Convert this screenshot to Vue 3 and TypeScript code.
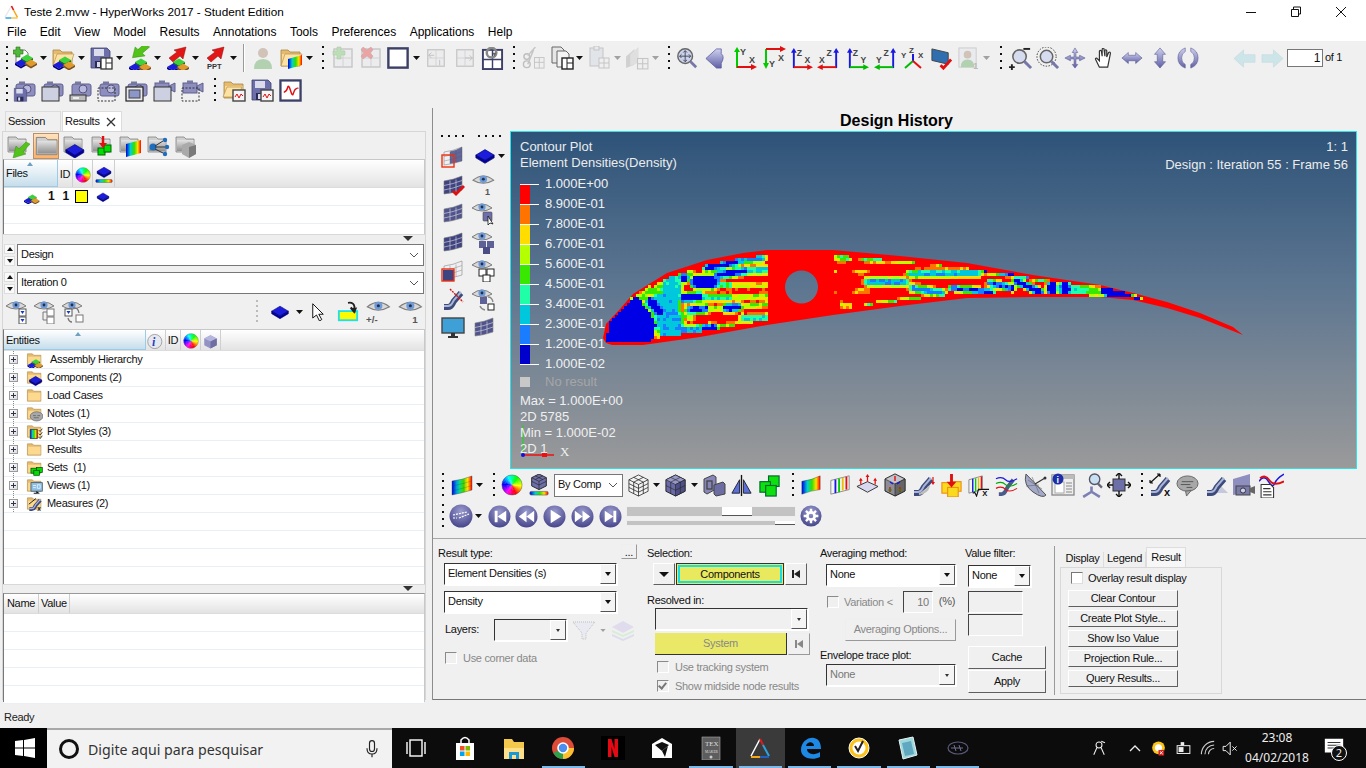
<script setup lang="ts">
type Raw = [string, number, number?, boolean?]
type Lab = [string, number, number, number, string?]
const sizes: Record<string, [number, number]> = { ar: [7, 4], grip: [2, 24], sep: [2, 28], sepd: [2, 24] }
const labels: Record<string, Lab[]> = {
  ppt: [['PPT', 4, 23, 7.5, '#333']],
  person1: [['1', 17, 23, 9, '#555']],
  axxy: [['Y', 7, 9, 9], ['X', 16, 17, 9]],
  axmxy: [['Y', 7, 21, 9], ['X', 16, 15, 9]],
  axzx: [['Z', 7, 9, 9], ['X', 15, 17, 9]],
  axxz: [['Z', 10, 9, 9], ['X', 2, 17, 9]],
  axzy: [['Z', 7, 9, 9], ['Y', 15, 17, 9]],
  axyz: [['Z', 10, 9, 9], ['Y', 2, 17, 9]],
  axiso: [['Y', 0, 12, 8], ['Z', 8, 7, 8], ['X', 17, 12, 8]],
  eyepm: [['+/-', 1, 22, 9, '#555']],
  eye1: [['1', 14, 22, 9, '#555']],
  sqrt: [['X', 16, 23, 8, '#111']],
  meas: [['x', 16, 23, 11, '#111']],
  infow: [['i', 5.5, 9.5, 9, '#fff']],
  fmeas: [['x', 16, 23, 9, '#111']],
  ttex: [['TEX', 6, 10, 7, '#ddd'], ['MAKER', 6, 17, 3.6, '#ddd']]
}
function layout(list: Raw[], start: number) {
  let end = start
  return list.map((r, i) => {
    const sp = sizes[r[0]]
    const w = r[2] ?? (sp ? sp[0] : 24)
    const h = sp ? sp[1] : w
    const s = { marginLeft: r[1] - end + 'px', width: w + 'px', height: h + 'px' }
    end = r[1] + w
    return { k: i, n: r[0], h: '#' + r[0], f: !!r[3], s, v: sp ? undefined : '0 0 24 24', t: labels[r[0]] || [] }
  })
}
const tb1 = layout([
  ['grip', 6], ['newm', 13], ['ar', 40], ['openm', 51], ['ar', 78], ['savew', 89], ['ar', 116], ['imp', 127], ['ar', 154], ['exp', 165], ['ar', 192], ['ppt', 203], ['ar', 230],
  ['sep', 243], ['person', 251, 24, true], ['fcont', 279], ['ar', 306], ['grip', 322], ['pageadd', 331, 24, true], ['pagedel', 359, 24, true], ['blank', 387, 22], ['ar', 413],
  ['pgprev', 425, 22, true], ['pgnext', 454, 22, true], ['reload', 481, 23], ['grip', 513], ['cut', 522, 23, true], ['copyw', 550, 24], ['ar', 576], ['pastew', 587, 24, true], ['ar', 614, undefined, true],
  ['overl', 625, 25, true], ['ar', 652, undefined, true], ['grip', 668], ['zfit', 676, 22], ['back', 704, 23], ['axxy', 733, 24], ['axmxy', 762, 24], ['axzx', 790, 23], ['axxz', 817, 23], ['axzy', 846, 23], ['axyz', 874, 23],
  ['axiso', 901, 24], ['scr', 930, 23], ['person1', 957, 23, true], ['ar', 983, undefined, true], ['grip', 1000], ['zarea', 1009, 23], ['zcirc', 1036, 23], ['pan', 1064, 22], ['hand', 1093, 22], ['harrow', 1121, 22], ['varrow', 1149, 22],
  ['rot', 1177, 22], ['nprev', 1233, 23, true], ['nnext', 1261, 23, true]
], 0)
const tb2 = layout([
  ['grip', 6], ['camfl', 13], ['camwin', 41], ['camstrip', 69], ['camdash', 97], ['camsel', 125], ['vidwin', 153], ['viddash', 181], ['grip', 214], ['fplot', 222], ['splot', 250], ['plot', 279, 23]
], 0)
const panelRow = layout([
  ['gfcheck', 5], ['gfplain', 33], ['gfdia', 61], ['gfset', 89], ['gfcont', 117], ['gfnet', 145], ['gfcube', 173]
], 2)
const eyeRow = layout([
  ['eyet1', 4, 24], ['eyet2', 32, 24], ['eyet3', 60, 24], ['sepd', 255], ['slab', 269, 20], ['ar', 295], ['cursor', 308, 18], ['yarrow', 336, 22], ['eyepm', 364, 26], ['eye1', 396, 26]
], 2)
const vtools: Raw[][] = [
  [['meshsel', 8, 24], ['slab', 41, 22], ['ar', 65]],
  [['meshback', 8, 24], ['eye1', 38, 24]],
  [['mesh', 8, 24], ['eyesq', 38, 24]],
  [['mesh2', 8, 24], ['eye3', 38, 24]],
  [['meshsel2', 8, 24], ['eye3o', 38, 24]],
  [['tube', 8, 24], ['eyesync', 38, 24]],
  [['monitor', 8, 24], ['mesh', 39, 24]]
]
const vrows = vtools.map(r => layout(r, 0))
const tb3 = layout([
  ['grip', 442], ['cmesh', 450, 24], ['ar', 476], ['grip', 493], ['wheel', 501, 22], ['ccube', 528, 22]
], 433)
const tb3b = layout([
  ['wire', 627, 23], ['ar', 653], ['shade', 664, 23], ['ar', 691], ['stack', 702, 24], ['mirror', 730, 23], ['greens', 758, 23], ['grip', 792], ['cont', 800, 22], ['stripes', 829, 22], ['plane', 856, 23], ['cubea', 883, 24],
  ['shapea', 911, 24], ['yorg', 940, 23], ['sqrt', 967, 23], ['curves', 995, 23], ['dish', 1023, 24], ['infow', 1051, 24], ['axzoom', 1079, 25], ['boxa', 1107, 24], ['grip', 1141], ['meas', 1148, 24], ['bubble', 1176, 23], ['layersh', 1204, 24], ['camlay', 1232, 24], ['report', 1259, 25]
], 623)
const tb4 = layout([
  ['grip', 442], ['playlist', 449, 24], ['ar', 475], ['first', 488, 23], ['rew', 515, 23], ['play', 543, 23], ['ffw', 571, 23], ['last', 599, 23]
], 433)
const tree: [string, string, boolean?][] = [
  ['fmodel', 'Assembly Hierarchy', true], ['fdia', 'Components (2)'], ['fold1', 'Load Cases'], ['fnote', 'Notes (1)'], ['fstyle', 'Plot Styles (3)'],
  ['fold1', 'Results'], ['fset', 'Sets  (1)'], ['fview', 'Views (1)'], ['fmeas', 'Measures (2)']
]
const legend = [
  ['1.000E+00', '#ff0000'], ['8.900E-01', '#ff7300'], ['7.800E-01', '#ffdd00'], ['6.700E-01', '#b4ff00'], ['5.600E-01', '#39e800'],
  ['4.500E-01', '#1effa8'], ['3.400E-01', '#00c8dc'], ['2.300E-01', '#1a7dff'], ['1.200E-01', '#0000cd'], ['1.000E-02', '']
]
const wedges = Array.from({ length: 36 }, (_, i) => {
  const a0 = ((i * 10 - 90) * Math.PI) / 180
  const a1 = (((i + 1.3) * 10 - 90) * Math.PI) / 180
  const p = (a: number) => `${(12 + 11 * Math.cos(a)).toFixed(2)} ${(12 + 11 * Math.sin(a)).toFixed(2)}`
  return { d: `M12 12L${p(a0)}L${p(a1)}Z`, c: `hsl(${(510 - i * 10) % 360},100%,50%)` }
})

/* ---- density field of the airfoil ---- */
const up = [[603, 338], [606, 324], [620, 309], [633, 294], [667, 273], [707, 260], [743, 253], [767, 250], [833, 250], [900, 256], [967, 263], [1033, 275], [1100, 285], [1133, 293], [1167, 302], [1200, 313], [1233, 327], [1243, 335]]
const lo = [[603, 338], [606, 343], [612, 345], [643, 345], [700, 337], [767, 325], [833, 315], [900, 306], [967, 298], [1033, 297], [1100, 297], [1133, 300], [1167, 308], [1200, 318], [1233, 331], [1243, 335]]
const interp = (t: number[][], x: number) => {
  for (let i = 1; i < t.length; i++) if (x <= t[i][0]) {
    const [a, b] = [t[i - 1], t[i]]
    return a[1] + ((b[1] - a[1]) * (x - a[0])) / (b[0] - a[0])
  }
  return t[t.length - 1][1]
}
const seg = (x: number, y: number, a: number, b: number, c: number, d: number) => {
  const dx = c - a, dy = d - b, l = dx * dx + dy * dy
  const t = l ? Math.max(0, Math.min(1, ((x - a) * dx + (y - b) * dy) / l)) : 0
  return Math.hypot(x - a - t * dx, y - b - t * dy)
}
const caps: number[][] = [
  [664, 305, 672, 330, 11, 0.27, 7], [672, 285, 668, 318, 8, 0.3, 6], [650, 292, 690, 274, 2, 0.5, 5], [640, 300, 650, 290, 2, 0.55, 5],
  [697, 282, 713, 282, 4.5, 0.05, 5], [684, 278, 684, 278, 3, 0.05, 5], [651, 302, 660, 312, 3.5, 0.05, 5],
  [707, 268, 737, 262, 1.5, 0.05, 5], [742, 260, 762, 258, 1.5, 0.2, 5], [718, 275, 745, 271, 1.8, 0.05, 5], [745, 271, 765, 270, 1.5, 0.3, 5],
  [700, 285, 730, 285, 1.5, 0.45, 4], [730, 285, 765, 286, 1, 0.65, 4],
  [683, 298, 700, 297, 2.5, 0.05, 5], [700, 297, 730, 298, 1.2, 0.35, 5], [730, 298, 767, 296, 1, 0.6, 4],
  [690, 310, 705, 309, 2, 0.1, 5], [705, 309, 725, 308, 1.2, 0.55, 4], [727, 308, 737, 307, 2.2, 0.05, 5], [737, 307, 767, 304, 1, 0.55, 4],
  [743, 318, 767, 318, 1.5, 0.35, 4], [670, 332, 700, 330, 3, 0.25, 5], [704, 329, 714, 328, 2, 0.05, 5], [714, 328, 740, 325, 1, 0.5, 4], [740, 325, 767, 322, 0.6, 0.5, 3], [682, 315, 690, 318, 1.5, 0.55, 4],
  [838, 258, 848, 258, 1.5, 0.5, 4], [864, 258, 882, 259, 1.5, 0.4, 4], [884, 260, 930, 263, 0.6, 0.5, 2.5], [856, 272, 866, 272, 1, 0.72, 3], [835, 272, 835, 272, 0.8, 0.72, 2], [835, 291, 835, 291, 0.8, 0.72, 2],
  [868, 282, 905, 282, 1.8, 0.25, 5], [880, 282, 892, 282, 1, 0.05, 3], [855, 292, 866, 291, 1, 0.72, 3], [915, 288, 932, 293, 1.2, 0.25, 4], [867, 305, 930, 297, 0.6, 0.5, 2.5], [842, 305, 850, 306, 1, 0.65, 3], [920, 273, 932, 273, 1.2, 0.3, 4],
  [900, 260, 957, 266, 0.6, 0.5, 2.5], [910, 274, 978, 273, 1.2, 0.25, 5], [985, 270, 1038, 277, 1.2, 0.08, 4], [990, 283, 1012, 288, 1.5, 0.1, 4], [1016, 281, 1040, 292, 1.8, 0.05, 4], [1034, 278, 1044, 279, 1, 0.2, 3],
  [912, 288, 942, 293, 1.2, 0.15, 5], [952, 288, 992, 292, 1.2, 0.12, 4], [900, 300, 943, 297, 0.6, 0.5, 2.5],
  [1052, 287, 1052, 290, 4, 0.05, 4], [1065, 287, 1065, 290, 4, 0.05, 4], [1074, 288, 1086, 291, 4, 0.4, 6], [1086, 291, 1098, 292, 2.5, 0.5, 5],
  [1104, 291, 1125, 296, 3.5, 0.05, 2], [1125, 296, 1139, 299, 1.2, 0.05, 2]
]
const nosePoly = [[606, 341], [610, 320], [622, 305], [637, 297], [650, 313], [656, 325], [652, 343], [612, 343]]
const inPoly = (x: number, y: number) => {
  let c = false
  for (let i = 0, j = nosePoly.length - 1; i < nosePoly.length; j = i++) {
    const [a, b] = nosePoly[i], [e, f] = nosePoly[j]
    if (b > y !== f > y && x < ((e - a) * (y - b)) / (f - b) + a) c = !c
  }
  return c
}
const noseDist = (x: number, y: number) => {
  let d = 1e9
  for (let i = 0, j = nosePoly.length - 1; i < nosePoly.length; j = i++) d = Math.min(d, seg(x, y, nosePoly[i][0], nosePoly[i][1], nosePoly[j][0], nosePoly[j][1]))
  return d
}
const ramp = ['#0000e6', '#1a7dff', '#00c8dc', '#1effa8', '#39e800', '#b4ff00', '#ffdd00', '#ff7300']
const cuts = [0.12, 0.23, 0.34, 0.45, 0.56, 0.67, 0.78, 0.89]
const buckets: string[] = ramp.map(() => '')
for (let x = 606; x < 1240; x += 3) {
  for (let y = 249; y < 346; y += 3) {
    const cx = x + 1.5, cy = y + 1.5
    const t = interp(up, cx), b = interp(lo, cx)
    const m = cx < 650 ? 2.5 : cx < 1000 ? 5 : cx < 1090 ? 3 : 1.5
    if (cy < t + m || cy > b - m) continue
    const nose = cx < 660 && inPoly(cx, cy)
    if (cx < 615 && !nose) continue
    if (cx > 767 && cx < 835) continue
    let v = 1
    if (nose) v = 0.05
    else if (cx < 680) v = Math.min(v, 0.35 + noseDist(cx, cy) / 5)
    for (const c of caps) {
      const d = seg(cx, cy, c[0], c[1], c[2], c[3])
      const w = c[4], l = c[5], band = c[6]
      v = Math.min(v, l + (Math.max(0, d - w) / band) * (1 - l))
    }
    const n = Math.sin(x * 12.9898 + y * 78.233) * 43758.5453
    if (!nose) v += (n - Math.floor(n) - 0.5) * 0.14
    const i = cuts.findIndex(q => v < q)
    if (i >= 0) buckets[i] += `M${x} ${y}h3v3h-3z`
  }
}
const meshCells = ramp.map((c, i) => ({ c, d: buckets[i] }))
const outline = 'M' + up.map(p => p.join(' ')).join('L') + 'L' + [...lo].reverse().map(p => p.join(' ')).join('L') + 'Z M818 287a16.5 16.5 0 1 0 -33 0a16.5 16.5 0 1 0 33 0Z'
const menus = ['File', 'Edit', 'View', 'Model', 'Results', 'Annotations', 'Tools', 'Preferences', 'Applications', 'Help']
const sideBtns = ['Clear Contour', 'Create Plot Style...', 'Show Iso Value', 'Projection Rule...', 'Query Results...']
const taskApps = ['tstore', 'texplorer', 'tchrome', 'tnetflix', 'tmail', 'ttex', 'thw', 'tedge', 'tnorton', 'tnote', 'thp']
const open = ['tchrome', 'ttex', 'thw', 'tedge', 'tnorton', 'tnote', 'thp']
</script>

<template>
  <svg class="defs" width="0" height="0" aria-hidden="true">
    <defs>
      <linearGradient id="gm" x1="0" y1="0" x2="0" y2="1"><stop offset="0" stop-color="#cfd0ee"/><stop offset="1" stop-color="#5f60a5"/></linearGradient>
      <radialGradient id="gr" cx=".5" cy=".3" r=".75"><stop offset="0" stop-color="#9c9ccf"/><stop offset="1" stop-color="#3f3f86"/></radialGradient>
      <linearGradient id="gf" x1="0" y1="0" x2="0" y2="1"><stop offset="0" stop-color="#e3e3e3"/><stop offset="1" stop-color="#8f8f8f"/></linearGradient>
      <linearGradient id="rain" x1="0" y1="0" x2="1" y2="0"><stop offset="0" stop-color="#0000e0"/><stop offset=".3" stop-color="#00d0d0"/><stop offset=".55" stop-color="#30e000"/><stop offset=".78" stop-color="#ffe000"/><stop offset="1" stop-color="#ff0000"/></linearGradient>
      <g id="cb"><path fill="#1c1cdc" d="M-6 0 0-3.5 6 0 0 3.5z"/><path fill="#00008a" d="M-6 0v2L0 5.5 6 2V0L0 3.5z"/></g>
      <g id="cg"><path fill="#3bd23b" d="M-6 0 0-3.5 6 0 0 3.5z"/><path fill="#0b7a0b" d="M-6 0v2L0 5.5 6 2V0L0 3.5z"/></g>
      <g id="co"><path fill="#e09a2a" d="M-6 0 0-3.5 6 0 0 3.5z"/><path fill="#80521a" d="M-6 0v2L0 5.5 6 2V0L0 3.5z"/></g>
      <g id="cubes"><use href="#cg" x="14" y="12"/><use href="#cb" x="8" y="17"/><use href="#co" x="18" y="17"/></g>
      <g id="slabg"><path fill="#1c1cdc" stroke="#00006e" stroke-width=".7" d="M2 11 12 5l10 6-10 6z"/><path fill="#0000a0" stroke="#000060" stroke-width=".7" d="M2 11v3l10 6 10-6v-3l-10 6z"/></g>
      <g id="fold"><path fill="#e6bb70" stroke="#a98642" stroke-width=".8" d="M2 4h7l2 2h10v14H2z"/><path fill="#fcd98e" d="M3 8h17.500v11H3z"/></g>
      <g id="gfold"><path fill="#cfcfcf" stroke="#808080" stroke-width=".8" d="M2 3h8l2 2h8v13H2z"/><path fill="url(#gf)" d="M3 6h16.500v11H3z"/></g>
      <g id="floppy"><path fill="#6c6fa9" stroke="#3d3f70" stroke-width=".8" d="M2 2h16l3 3v17H2z"/><rect fill="#dadcec" x="5" y="3" width="10" height="7"/><rect fill="#2a2c55" x="6" y="15" width="10" height="7"/><rect fill="#dadcec" x="8" y="16" width="3" height="5"/></g>
      <g id="win"><rect x="3" y="3" width="18" height="18" fill="#e5e7ec" stroke="#7a7a7a" stroke-width="1.4"/><path d="M12 3v18M3 12h18" stroke="#9a9a9a"/></g>
      <g id="eye"><path fill="#d8d8d8" stroke="#7d7d7d" d="M1 7Q11-1 21 7 11 13 1 7z"/><circle cx="11" cy="6" r="3.600" fill="#6f9ad8"/><circle cx="11" cy="6" r="1.400" fill="#22304a"/></g>
      <g id="cam"><rect x="3" y="6" width="19" height="12" rx="2" fill="#8e8fbf" stroke="#5e5f90"/><circle cx="14" cy="11" r="4" fill="#b9b9dd" stroke="#55557f"/><rect x="6" y="3.500" width="6" height="2.500" fill="#77789f"/></g>
      <g id="vid"><rect x="2" y="5" width="14" height="10" fill="#8e8fbf" stroke="#5e5f90"/><path d="M16 8l6-3v9l-6-3z" fill="#8e8fbf" stroke="#5e5f90"/><rect x="6" y="2.500" width="6" height="2.500" fill="#77789f"/></g>
      <g id="arrowr"><path fill="#e21616" stroke="#8c0d0d" stroke-width=".5" d="M4 12l8-6-3-2 12-3-3 12-3-3-7 6z"/></g>
      <g id="wplot"><rect x="11" y="12" width="12" height="11" fill="#f4f4f4" stroke="#444" stroke-width="1.400"/><path d="M13 19l2-3 2 4 2-4 2 2" fill="none" stroke="#e01010"/></g>
      <g id="meshg"><path fill="#3f4480" stroke="#777" stroke-width=".6" d="M3 8Q12 7 21 3v14Q12 20 3 21z"/><path stroke="#c8c8d8" stroke-width=".7" fill="none" d="M9 7.500v12.300M15 6.500v12M3 12.500Q12 11 21 7.500M3 17Q12 15.500 21 12"/></g>
      <g id="mesho"><path fill="#f0f0f2" stroke="#888" stroke-width=".6" d="M3 8Q12 7 21 3v14Q12 20 3 21z"/><path stroke="#999" stroke-width=".6" fill="none" d="M9 7.500v12.300M15 6.500v12M3 12.500Q12 11 21 7.500M3 17Q12 15.500 21 12"/></g>
      <g id="cmeshg"><path fill="url(#rain)" stroke="#345" stroke-width=".4" d="M2 8Q12 7 22 3v14Q12 20 2 22z"/><path stroke="#203060" stroke-opacity=".45" stroke-width=".5" fill="none" d="M8 7.500v13M14 6.500v12.500M2 13Q12 11 22 8M2 18Q12 15.500 22 12.500"/></g>
      <g id="tubeg"><path fill="none" stroke="#3d4a7a" stroke-width="6" d="M3 20h4c4 0 4-3 6-6l7-8"/><path fill="none" stroke="#aab6d8" stroke-width="2" d="M3 19h4c4 0 4-3 6-6l7-8"/></g>
    </defs>

    <symbol id="grip" viewBox="0 0 2 24"><path fill="#111" d="M0 0h2v2H0zM0 7h2v2H0zM0 14h2v2H0zM0 21h2v2H0z"/></symbol>
    <symbol id="sepd" viewBox="0 0 2 24"><path fill="#bbb" d="M0 0h2v2H0zM0 5h2v2H0zM0 10h2v2H0zM0 15h2v2H0zM0 20h2v2H0z"/></symbol>
    <symbol id="sep" viewBox="0 0 2 28"><path stroke="#9a9a9a" d="M.5 0v28"/><path stroke="#fff" d="M1.500 0v28"/></symbol>
    <symbol id="ar" viewBox="0 0 7 4"><path d="M0 0h7L3.500 4z" fill="#111"/></symbol>
    <symbol id="newm" viewBox="0 0 24 24"><path fill="#fafafa" stroke="#7d7d7d" d="M3 4h9l3 3v12H3z"/><use href="#cubes"/><path fill="#4fb83a" stroke="#2f6e20" stroke-width=".6" d="M3 1h4v3h3v4H7v3H3V8H0V4h3z"/></symbol>
    <symbol id="openm" viewBox="0 0 24 24"><use href="#fold"/><path fill="#fde2a5" stroke="#ad8a45" stroke-width=".6" d="M6 8h17l-4 12H2z"/><use href="#cubes" y="2"/></symbol>
    <symbol id="savew" viewBox="0 0 24 24"><use href="#floppy"/><rect x="12" y="12" width="11" height="11" fill="#fff" stroke="#333" stroke-width="1.300"/><path d="M17 12v11M17 17h6" stroke="#333"/></symbol>
    <symbol id="imp" viewBox="0 0 24 24"><g transform="translate(1 0) scale(.9)"><path fill="#52c419" stroke="#2d7e0c" stroke-width=".5" d="M24 1l-8 7 3 3-14 2 3-12 3 3 7-6z"/></g><use href="#cubes" y="4"/></symbol>
    <symbol id="exp" viewBox="0 0 24 24"><use href="#arrowr"/><use href="#cubes" y="4"/></symbol>
    <symbol id="ppt" viewBox="0 0 24 24"><use href="#arrowr"/></symbol>
    <symbol id="person" viewBox="0 0 24 24"><circle cx="12" cy="7" r="5" fill="#9a7050"/><path d="M3 23q0-10 9-10t9 10z" fill="#3e9a3e"/></symbol>
    <symbol id="person1" viewBox="0 0 24 24"><rect x="2" y="1" width="18" height="20" fill="#dfe2ec" stroke="#888"/><circle cx="11" cy="8" r="4" fill="#9a7050"/><path d="M4 21q0-8 7-8t7 8z" fill="#3e9a3e"/></symbol>
    <symbol id="fcont" viewBox="0 0 24 24"><use href="#fold"/><path fill="#fde2a5" stroke="#ad8a45" stroke-width=".6" d="M6 8h17l-4 12H2z"/><path fill="url(#rain)" d="M9 13l14-4v10L9 23z"/></symbol>
    <symbol id="pageadd" viewBox="0 0 24 24"><use href="#win"/><path fill="#5cc24a" stroke="#2f6e20" stroke-width=".5" d="M6 1h4v4h4v4h-4v4H6V9H2V5h4z"/></symbol>
    <symbol id="pagedel" viewBox="0 0 24 24"><use href="#win"/><path fill="#e01818" stroke="#801010" stroke-width=".5" d="M4 1l4 3 4-3 2 3-3 3 3 3-2 3-4-3-4 3-2-3 3-3-3-3z"/></symbol>
    <symbol id="blank" viewBox="0 0 24 24"><rect x="1.500" y="1.500" width="21" height="21" fill="#fff" stroke="#3c3f66" stroke-width="2.600"/></symbol>
    <symbol id="pgprev" viewBox="0 0 24 24"><use href="#win"/><path d="M10 9H4l3-3M4 9l3 3M16 14v6" stroke="#666" fill="none"/></symbol>
    <symbol id="pgnext" viewBox="0 0 24 24"><use href="#win"/><path d="M12 12h8l-3-3M20 12l-3 3" stroke="#666" fill="none"/></symbol>
    <symbol id="reload" viewBox="0 0 24 24"><rect x="2" y="3" width="20" height="20" fill="#fff" stroke="#3c3f66" stroke-width="2"/><path d="M12 3v20M2 13h20" stroke="#3c3f66" stroke-width="1.500"/><circle cx="11" cy="6" r="5" fill="none" stroke="#888" stroke-width="2.600"/><path d="M16 6l-4 0 2 4z" fill="#666"/></symbol>
    <symbol id="cut" viewBox="0 0 24 24"><circle cx="5" cy="18" r="3.500" fill="none" stroke="#666" stroke-width="1.500"/><circle cx="5" cy="10" r="3" fill="none" stroke="#666" stroke-width="1.500"/><path d="M6 9 14 0M6 18 12 3" stroke="#777" stroke-width="1.500"/><rect x="13" y="11" width="10" height="11" fill="#eee" stroke="#777"/><path d="M18 11v11M13 16h10" stroke="#777"/></symbol>
    <symbol id="copyw" viewBox="0 0 24 24"><path d="M2 1h9l3 3v13H2z" fill="#e6e6e6" stroke="#666"/><path d="M7 5h9l3 3v13H7z" fill="#f4f4f4" stroke="#666"/><rect x="12" y="12" width="11" height="11" fill="#fff" stroke="#222" stroke-width="1.400"/><path d="M17 12v11M17 17h6" stroke="#222"/></symbol>
    <symbol id="pastew" viewBox="0 0 24 24"><rect x="3" y="2" width="13" height="18" fill="#c8cedd" stroke="#777"/><rect x="7" y="0" width="5" height="4" fill="#ddd" stroke="#777"/><rect x="12" y="12" width="10" height="10" fill="#eee" stroke="#777"/><path d="M17 12v10M12 17h10" stroke="#777"/></symbol>
    <symbol id="overl" viewBox="0 0 24 24"><path d="M1 10l8-7v15l-8 3z" fill="#9a9a9a"/><path d="M5 8l8-7v15l-8 3z" fill="#c0c0c0"/><rect x="12" y="12" width="10" height="10" fill="#eee" stroke="#777"/><path d="M17 12v10M12 17h10" stroke="#777"/></symbol>
    <symbol id="zfit" viewBox="0 0 24 24"><circle cx="10" cy="10" r="8" fill="#c9d2ea" stroke="#666" stroke-width="1.600"/><path d="M10 4v12M4 10h12M10 4l-2 2M10 4l2 2M10 16l-2-2M10 16l2-2M4 10l2-2M4 10l2 2M16 10l-2-2M16 10l-2 2" stroke="#445" stroke-width="1"/><path d="M16 16l6 6" stroke="#7578a8" stroke-width="3"/></symbol>
    <symbol id="back" viewBox="0 0 24 24"><path fill="url(#gm)" stroke="#5a5ba0" stroke-width=".8" d="M2 12 13 2h5v5q4 3 0 10v5h-5z"/></symbol>
    <symbol id="axxy" viewBox="0 0 24 24"><path d="M4 22V5" stroke="#0c0" stroke-width="2"/><path d="M1 6l3-5 3 5z" fill="#0c0"/><path d="M4 21h15" stroke="#e01010" stroke-width="2"/><path d="M18 18l6 3-6 3z" fill="#e01010"/></symbol>
    <symbol id="axmxy" viewBox="0 0 24 24"><path d="M4 3v15" stroke="#0c0" stroke-width="2"/><path d="M1 17l3 6 3-6z" fill="#0c0"/><path d="M4 3h15" stroke="#e01010" stroke-width="2"/><path d="M18 0l6 3-6 3z" fill="#e01010"/></symbol>
    <symbol id="axzx" viewBox="0 0 24 24"><path d="M4 22V5" stroke="#1818e0" stroke-width="2"/><path d="M1 6l3-5 3 5z" fill="#1818e0"/><path d="M4 21h15" stroke="#e01010" stroke-width="2"/><path d="M18 18l6 3-6 3z" fill="#e01010"/></symbol>
    <symbol id="axxz" viewBox="0 0 24 24"><path d="M20 22V5" stroke="#1818e0" stroke-width="2"/><path d="M17 6l3-5 3 5z" fill="#1818e0"/><path d="M20 21H5" stroke="#e01010" stroke-width="2"/><path d="M6 18l-6 3 6 3z" fill="#e01010"/></symbol>
    <symbol id="axzy" viewBox="0 0 24 24"><path d="M4 22V5" stroke="#1818e0" stroke-width="2"/><path d="M1 6l3-5 3 5z" fill="#1818e0"/><path d="M4 21h15" stroke="#0b0" stroke-width="2"/><path d="M18 18l6 3-6 3z" fill="#0b0"/></symbol>
    <symbol id="axyz" viewBox="0 0 24 24"><path d="M20 22V5" stroke="#1818e0" stroke-width="2"/><path d="M17 6l3-5 3 5z" fill="#1818e0"/><path d="M20 21H5" stroke="#0b0" stroke-width="2"/><path d="M6 18l-6 3 6 3z" fill="#0b0"/></symbol>
    <symbol id="axiso" viewBox="0 0 24 24"><path d="M12 16V8" stroke="#1818e0" stroke-width="2"/><path d="M12 15 4 22" stroke="#0b0" stroke-width="2"/><path d="M12 15l8 7" stroke="#e01010" stroke-width="2"/></symbol>
    <symbol id="scr" viewBox="0 0 24 24"><path d="M2 2l17 4v12L2 14z" fill="#2f6fb0" stroke="#444"/><path d="M22 13l-8 9-3-3" fill="none" stroke="#e01010" stroke-width="3"/></symbol>
    <symbol id="zarea" viewBox="0 0 24 24"><circle cx="11" cy="10" r="7" fill="#d5dcf0" stroke="#666" stroke-width="1.600"/><path d="M16 15l7 7" stroke="#7578a8" stroke-width="3"/><path d="M15 2h7" stroke="#222" stroke-width="2"/><path d="M0 21h6M3 18v6" stroke="#222" stroke-width="2"/></symbol>
    <symbol id="zcirc" viewBox="0 0 24 24"><circle cx="11" cy="10" r="10" fill="none" stroke="#333" stroke-dasharray="1.500 1.500"/><circle cx="11" cy="10" r="6.500" fill="#d5dcf0" stroke="#666" stroke-width="1.600"/><path d="M16 15l7 7" stroke="#7578a8" stroke-width="3"/></symbol>
    <symbol id="pan" viewBox="0 0 24 24"><path fill="url(#gm)" stroke="#555590" stroke-width=".6" d="M12 1l3 5h-2v5h4V9l6 3-6 3v-2h-4v6h2l-3 4-3-4h2v-6H7v2l-6-3 6-3v2h4V6H9z"/></symbol>
    <symbol id="hand" viewBox="0 0 24 24"><path fill="#fff" stroke="#333" stroke-width="1.300" d="M7 22 3 14q-1-2 1-2l3 3V5q0-2 2-1l1 6V3q0-2 2-1l1 8V4q1-2 2 0v7l2-5q2-1 2 1l-2 10-1 5z"/></symbol>
    <symbol id="harrow" viewBox="0 0 24 24"><path fill="url(#gm)" stroke="#555590" stroke-width=".6" d="M1 12l7-6v3h8V6l7 6-7 6v-3H8v3z"/></symbol>
    <symbol id="varrow" viewBox="0 0 24 24"><path fill="url(#gm)" stroke="#555590" stroke-width=".6" d="M12 1l6 7h-3v8h3l-6 7-6-7h3V8H6z"/></symbol>
    <symbol id="rot" viewBox="0 0 24 24"><path fill="url(#gm)" stroke="#555590" stroke-width=".6" d="M9 1v4Q5 7 5 12t4 7v4Q1 20 1 12T9 1zM15 1v4q4 2 4 7t-4 7v4q8-3 8-11T15 1z"/></symbol>
    <symbol id="nprev" viewBox="0 0 24 24"><path fill="#8fd0dc" stroke="#6ab0c0" stroke-width=".6" d="M1 12l10-9v5h12v8H11v5z"/></symbol>
    <symbol id="nnext" viewBox="0 0 24 24"><path fill="#8fd0dc" stroke="#6ab0c0" stroke-width=".6" d="M23 12 13 3v5H1v8h12v5z"/></symbol>
    <symbol id="camfl" viewBox="0 0 24 24"><use href="#cam"/><g transform="translate(0 9) scale(.65)"><use href="#floppy"/></g></symbol>
    <symbol id="camwin" viewBox="0 0 24 24"><use href="#cam"/><rect x="1" y="9" width="17" height="14" fill="#cdd0e0" stroke="#333"/></symbol>
    <symbol id="camstrip" viewBox="0 0 24 24"><use href="#cam"/><rect x="1" y="17" width="16" height="6" fill="#bbb" stroke="#333"/><path d="M4 20h6" stroke="#fff" stroke-width="1.500"/></symbol>
    <symbol id="camdash" viewBox="0 0 24 24"><use href="#cam"/><rect x="1" y="10" width="17" height="13" fill="none" stroke="#333" stroke-dasharray="2 1.500"/></symbol>
    <symbol id="camsel" viewBox="0 0 24 24"><use href="#cam"/><rect x="1" y="9" width="17" height="14" fill="#e8e8ee" stroke="#222" stroke-width="1.200"/><rect x="4" y="12" width="11" height="8" fill="#8c96c8" stroke="#444"/></symbol>
    <symbol id="vidwin" viewBox="0 0 24 24"><use href="#vid"/><rect x="1" y="9" width="17" height="14" fill="#cdd0e0" stroke="#333"/></symbol>
    <symbol id="viddash" viewBox="0 0 24 24"><use href="#vid"/><rect x="1" y="10" width="17" height="13" fill="none" stroke="#333" stroke-dasharray="2 1.500"/></symbol>
    <symbol id="fplot" viewBox="0 0 24 24"><use href="#fold"/><path fill="#fde2a5" stroke="#ad8a45" stroke-width=".6" d="M5 9h15l-4 10H1z"/><use href="#wplot"/></symbol>
    <symbol id="splot" viewBox="0 0 24 24"><use href="#floppy"/><use href="#wplot"/></symbol>
    <symbol id="plot" viewBox="0 0 24 24"><rect x="1.500" y="1.500" width="21" height="21" fill="#fff" stroke="#3c3f66" stroke-width="2.400"/><path d="M5 14q3-1 4-5t3 3 3 3 3-5 2 0" fill="none" stroke="#e01010" stroke-width="1.500"/></symbol>
    <symbol id="gfcheck" viewBox="0 0 24 24"><use href="#gfold"/><path d="M21 8 14 15l-3-3-3 12 13-4-3-2 7-8z" fill="#52c419" stroke="#2d7e0c" stroke-width=".4" transform="translate(-1 0)"/></symbol>
    <symbol id="gfplain" viewBox="0 0 24 24"><g transform="scale(1.150)"><use href="#gfold"/></g></symbol>
    <symbol id="gfdia" viewBox="0 0 24 24"><use href="#gfold"/><g transform="translate(2 6) scale(.9)"><use href="#slabg"/></g></symbol>
    <symbol id="gfset" viewBox="0 0 24 24"><use href="#gfold"/><rect x="8" y="14" width="7" height="7" fill="#0d0" stroke="#060"/><rect x="14" y="11" width="7" height="7" fill="#0d0" stroke="#060"/><path d="M13 2v9" stroke="#e01010" stroke-width="2.500"/><path d="M9 9h8l-4 5z" fill="#e01010"/></symbol>
    <symbol id="gfcont" viewBox="0 0 24 24"><use href="#gfold"/><path fill="url(#rain)" d="M8 10l15-4v13L8 23z"/></symbol>
    <symbol id="gfnet" viewBox="0 0 24 24"><use href="#gfold"/><circle cx="7" cy="13" r="3.500" fill="#1e6ec0"/><circle cx="19" cy="6" r="2.200" fill="#1e6ec0"/><circle cx="21" cy="13" r="2.200" fill="#1e6ec0"/><circle cx="19" cy="20" r="2.200" fill="#1e6ec0"/><path d="M9 12l8-5M9 13h10M9 15l8 4" stroke="#333"/></symbol>
    <symbol id="gfcube" viewBox="0 0 24 24"><use href="#gfold"/><path d="M8 11l7-3 7 3v9l-7 4-7-4z" fill="#aaa"/><path d="M15 13v11l7-4v-9z" fill="#7a7a7a"/></symbol>
    <symbol id="wheel" viewBox="0 0 24 24"><path v-for="(w, i) in wedges" :key="i" :d="w.d" :fill="w.c"/><circle cx="12" cy="12" r="11" fill="none" stroke="#555" stroke-width=".5"/></symbol>
    <symbol id="slab" viewBox="0 0 24 24"><use href="#slabg"/></symbol>
    <symbol id="slabbar" viewBox="0 0 24 24"><g transform="translate(1 -3) scale(.92)"><use href="#slabg"/></g><rect x="1" y="18" width="22" height="4" rx="1.500" fill="url(#rain)" stroke="#555" stroke-width=".6"/></symbol>
    <symbol id="gcube" viewBox="0 0 24 24"><path d="M2 7l10-5 10 5v11l-10 5-10-5z" fill="#9292c4"/><path d="M2 7l10 5 10-5-10-5z" fill="#b5b5dd"/><path d="M12 12v11l10-5V7z" fill="#6e6ea2"/></symbol>
    <symbol id="eyet1" viewBox="0 0 24 24"><use href="#eye" x="0" y="-1"/><path d="M17 10v11M17 12h2M17 18h2" stroke="#777"/><rect x="14" y="9" width="7" height="7" fill="#fff" stroke="#555"/><rect x="14" y="17" width="7" height="7" fill="#fff" stroke="#555"/><path d="M15.500 11l2 3 2-3zM15.500 19l2 3 2-3z" fill="#1438c8"/></symbol>
    <symbol id="eyet2" viewBox="0 0 24 24"><use href="#eye" x="0" y="-1"/><rect x="14" y="9" width="7" height="7" fill="#fff" stroke="#777"/><rect x="14" y="17" width="7" height="7" fill="#fff" stroke="#777"/><path d="M10 12h4M10 20h4M10 12v8" stroke="#777"/></symbol>
    <symbol id="eyet3" viewBox="0 0 24 24"><use href="#eye" x="0" y="-1"/><rect x="4" y="9" width="7" height="7" fill="#fff" stroke="#555"/><path d="M5.500 11l2 3 2-3z" fill="#1438c8"/><rect x="15" y="15" width="7" height="7" fill="#fff" stroke="#777"/><path d="M12 8q5-1 6 5M11 22q-3 0-4-4" fill="none" stroke="#777" stroke-width="1.300"/></symbol>
    <symbol id="cursor" viewBox="0 0 24 24"><path d="M5 1v19l5-4 4 8 3-2-4-7h6z" fill="#fff" stroke="#111" stroke-width="1.300"/></symbol>
    <symbol id="yarrow" viewBox="0 0 24 24"><rect x="2" y="11" width="20" height="10" fill="#fafa00" stroke="#1de0e8" stroke-width="2"/><path d="M12 2q6-1 7 4v5l-4-4" fill="none" stroke="#222" stroke-width="2"/><path d="M14 8l5 6 3-7z" fill="#222"/></symbol>
    <symbol id="eyepm" viewBox="0 0 24 24"><g transform="translate(1 0) scale(1.030)"><use href="#eye"/></g></symbol>
    <symbol id="eye1" viewBox="0 0 24 24"><g transform="translate(1 0) scale(1.030)"><use href="#eye"/></g></symbol>
    <symbol id="meshsel" viewBox="0 0 24 24"><use href="#mesho"/><path d="M9 7.500Q15 6.500 21 3v14Q15 18.500 9 19.800z" fill="#4a4f85" opacity=".85"/><rect x="1" y="11" width="12" height="12" fill="none" stroke="#f03010" stroke-width="1.400"/></symbol>
    <symbol id="meshback" viewBox="0 0 24 24"><use href="#meshg"/><path d="M23 13 15 21l-3-3" fill="none" stroke="#e01010" stroke-width="3"/></symbol>
    <symbol id="mesh" viewBox="0 0 24 24"><use href="#meshg" opacity=".9"/></symbol>
    <symbol id="mesh2" viewBox="0 0 24 24"><use href="#meshg"/></symbol>
    <symbol id="meshsel2" viewBox="0 0 24 24"><use href="#mesho"/><path d="M2 12h11v11H2z" fill="#3f4480"/><rect x="1" y="11" width="12" height="12" fill="none" stroke="#f03010" stroke-width="1.400"/></symbol>
    <symbol id="tube" viewBox="0 0 24 24"><use href="#tubeg"/><path d="M9 2l13 13" stroke="#e01010" stroke-dasharray="2 1" stroke-width="1.400"/></symbol>
    <symbol id="monitor" viewBox="0 0 24 24"><rect x="1" y="3" width="22" height="15" fill="#3fa0d8" stroke="#444" stroke-width="1.400"/><path d="M10 18h4v3h3v2H7v-2h3z" fill="#333"/></symbol>
    <symbol id="eyesq" viewBox="0 0 24 24"><use href="#eye"/><rect x="12" y="11" width="9" height="9" rx="1" fill="#6d6fa8" stroke="#444" stroke-width=".6"/><path d="M17 15v9l2-2 3 1z" fill="#fff" stroke="#111" stroke-width=".8"/></symbol>
    <symbol id="eye3" viewBox="0 0 24 24"><use href="#eye"/><rect x="8" y="11" width="7" height="7" fill="#5e6098"/><rect x="16" y="11" width="7" height="7" fill="#5e6098"/><rect x="12" y="17" width="7" height="7" fill="#4a4c85"/></symbol>
    <symbol id="eye3o" viewBox="0 0 24 24"><use href="#eye"/><rect x="8" y="11" width="7" height="7" fill="#fff" stroke="#222"/><rect x="16" y="11" width="7" height="7" fill="#fff" stroke="#222"/><rect x="12" y="17" width="7" height="7" fill="#fff" stroke="#222"/></symbol>
    <symbol id="eyesync" viewBox="0 0 24 24"><use href="#eye"/><rect x="9" y="10" width="7" height="7" fill="#5e6098"/><rect x="17" y="17" width="6" height="6" fill="#fff" stroke="#222"/><path d="M17 10q4 0 5 5M14 23q-4-1-5-4" fill="none" stroke="#888" stroke-width="1.400"/></symbol>
    <symbol id="cmesh" viewBox="0 0 24 24"><use href="#cmeshg"/></symbol>
    <symbol id="ccube" viewBox="0 0 24 24"><path d="M4 4l8-4 8 4v9l-8 4-8-4z" fill="#6e6ea8" stroke="#222"/><path d="M4 4l8 4 8-4M12 8v9M8 2l8 4M16 2 8 6M4 8l8 4 8-4" stroke="#222" fill="none" stroke-width=".7"/><rect x="2" y="19" width="20" height="4" rx="1.500" fill="url(#rain)" stroke="#555" stroke-width=".6"/></symbol>
    <symbol id="wire" viewBox="0 0 24 24"><path d="M12 1l10 5v12l-10 5L2 18V6zM2 6l10 5 10-5M12 11v12M7 3.500l10 5M17 3.500 7 8.500M2 10l10 5 10-5M2 14l10 5 10-5M7 8.500v12M17 8.500v12" fill="#f4f4f4" stroke="#222" stroke-width=".8"/></symbol>
    <symbol id="shade" viewBox="0 0 24 24"><path d="M12 1l10 5v12l-10 5L2 18V6z" fill="#6a6ba6" stroke="#222"/><path d="M2 6l10-5 10 5-10 5z" fill="#9798c8" stroke="#222" stroke-width=".6"/><path d="M12 11v12l10-5V6z" fill="#4e4f85" stroke="#222" stroke-width=".6"/><path d="M7 3.500l10 5M17 3.500 7 8.500M2 12l10 5 10-5M7 8.500v12M17 8.500v12" stroke="#222" stroke-width=".6" fill="none"/></symbol>
    <symbol id="stack" viewBox="0 0 24 24"><path d="M2 6l9-4 3 2v12l-9 5-3-2z" fill="#8687b8" stroke="#444"/><rect x="5" y="8" width="5" height="8" fill="none" stroke="#444" stroke-width="1.300"/><path d="M12 12l9-3 2 2v10l-9 2-2-2z" fill="#6c6da3" stroke="#444"/></symbol>
    <symbol id="mirror" viewBox="0 0 24 24"><path d="M10 6v14H2z" fill="#5a70d8" stroke="#223"/><path d="M14 6v14h8z" fill="#5a70d8" stroke="#223"/><path d="M12 1v22" stroke="#111" stroke-width="1.400"/></symbol>
    <symbol id="greens" viewBox="0 0 24 24"><rect x="11" y="2" width="11" height="11" fill="#0de10d" stroke="#063" stroke-width="1.200"/><rect x="2" y="8" width="11" height="11" fill="#0de10d" stroke="#063" stroke-width="1.200"/><rect x="8" y="12" width="11" height="11" fill="#0de10d" stroke="#063" stroke-width="1.200"/></symbol>
    <symbol id="cont" viewBox="0 0 24 24"><path fill="url(#rain)" stroke="#334" stroke-width=".4" d="M2 8Q12 7 22 2v15Q12 18 2 22z"/></symbol>
    <symbol id="stripes" viewBox="0 0 24 24"><path d="M2 7l20-5v15L2 22z" fill="#f4f4f4" stroke="#888"/><path d="M7 6v15" stroke="#1818e0" stroke-width="2"/><path d="M11 5v15" stroke="#0c0" stroke-width="2"/><path d="M15 4v14" stroke="#e8c000" stroke-width="2"/><path d="M19 3v14" stroke="#e01010" stroke-width="2"/></symbol>
    <symbol id="plane" viewBox="0 0 24 24"><path d="M1 13l11-5 11 5-11 6z" fill="#d8d8f0" stroke="#333"/><path d="M5 11V6M12 8V2M20 11V6" stroke="#e01010" stroke-width="1.300"/><path d="M3 7l2-3 2 3zM10 3l2-3 2 3zM18 7l2-3 2 3z" fill="#e01010"/></symbol>
    <symbol id="cubea" viewBox="0 0 24 24"><path d="M12 1l10 5v12l-10 5L2 18V6z" fill="#8e8e99" stroke="#222"/><path d="M2 6l10 5 10-5-10-5z" fill="#c4c4cc" stroke="#222" stroke-width=".6"/><path d="M12 11v12l10-5V6z" fill="#666" stroke="#222" stroke-width=".6"/><path d="M12 3v5M7 14v5M17 14v5" stroke="#e01010" stroke-width="1.400"/><path d="M7 9l3 2M17 9l-3 2" stroke="#1818e0" stroke-width="1.400"/><path d="M5 17h4M15 17h4" stroke="#0a0" stroke-width="1.200"/></symbol>
    <symbol id="shapea" viewBox="0 0 24 24"><use href="#tubeg"/><path d="M8 21q8-1 10-8" fill="#ccc" stroke="#bbb" stroke-width="2"/><path d="M22 4v6" stroke="#e01010" stroke-width="1.200"/><path d="M20 9h4l-2 3z" fill="#e01010"/></symbol>
    <symbol id="yorg" viewBox="0 0 24 24"><rect x="2" y="9" width="11" height="11" fill="#fada20" stroke="#f09010" stroke-width="1.200"/><rect x="12" y="8" width="10" height="10" fill="#fada20" stroke="#f09010" stroke-width="1.200"/><rect x="8" y="14" width="11" height="10" fill="#fada20" stroke="#f09010" stroke-width="1.200"/><path d="M12 0v9" stroke="#e01010" stroke-width="3"/><path d="M7 8h10l-5 6z" fill="#e01010"/></symbol>
    <symbol id="sqrt" viewBox="0 0 24 24"><path d="M2 6l14-4v14L2 20z" fill="#f4f4f4" stroke="#888"/><path d="M6 5v14" stroke="#1818e0" stroke-width="1.500"/><path d="M9 4.500v14" stroke="#0c0" stroke-width="1.500"/><path d="M12 3.500v13" stroke="#e8c000" stroke-width="1.500"/><path d="M15 2.500v13" stroke="#e01010" stroke-width="1.500"/><path d="M6 20l2-1 2 4 2-7h11" fill="none" stroke="#111" stroke-width="1.200"/></symbol>
    <symbol id="curves" viewBox="0 0 24 24"><path fill="none" stroke="#4a5a8a" stroke-width="4" d="M4 21h3c4 0 4-4 6-7l6-8"/><path d="M1 5q6-3 10 1t12-1" fill="none" stroke="#1818e0" stroke-width="1.200"/><path d="M1 10q6-3 10 1t12-1" fill="none" stroke="#0a0" stroke-width="1.200"/><path d="M1 15q6-3 10 1t12-1" fill="none" stroke="#e01010" stroke-width="1.200"/></symbol>
    <symbol id="dish" viewBox="0 0 24 24"><path d="M3 1Q0 12 10 19t13 3z" fill="#a2a8c8" stroke="#555"/><path d="M5 7l14 9M9 4l7 16M3 13l13-1" stroke="#666" stroke-width=".6"/><path d="M12 11l10-6" stroke="#333" stroke-width="1.200"/><circle cx="22" cy="5" r="1.500" fill="#333"/></symbol>
    <symbol id="infow" viewBox="0 0 24 24"><rect x="1" y="2" width="22" height="20" fill="#eee" stroke="#888" stroke-width="1.300"/><rect x="1" y="2" width="22" height="4" fill="#bbb"/><rect x="4" y="9" width="9" height="11" fill="#fff" stroke="#aaa"/><path d="M15 10h6M15 13h6M15 16h6M15 19h6" stroke="#888"/><circle cx="7" cy="6" r="5.500" fill="#1d2fa8"/></symbol>
    <symbol id="axzoom" viewBox="0 0 24 24"><circle cx="15" cy="6" r="5" fill="#c7e0f2" stroke="#556" stroke-width="1.300"/><path d="M18 10l4 4" stroke="#667" stroke-width="2.200"/><path d="M12 13v5M12 18l-8 5M12 18l8 5" stroke="#7d80b4" stroke-width="2.500"/></symbol>
    <symbol id="boxa" viewBox="0 0 24 24"><rect x="6" y="6" width="12" height="12" fill="#6d6fa8" stroke="#333"/><path d="M12 0v6M12 24v-6M0 12h6M24 12h-6" stroke="#111" stroke-width="1.400"/><path d="M9 3l3-3 3 3M9 21l3 3 3-3M3 9l-3 3 3 3M21 9l3 3-3 3" stroke="#111" stroke-width="1.400" fill="none"/></symbol>
    <symbol id="meas" viewBox="0 0 24 24"><use href="#tubeg"/><path d="M2 10 12 1M2 10h3M2 10v-3M12 1H9M12 1v3" stroke="#111" stroke-width="1.200" fill="none"/></symbol>
    <symbol id="bubble" viewBox="0 0 24 24"><ellipse cx="12" cy="10" rx="11" ry="8" fill="#a8a8a8" stroke="#666"/><path d="M10 18l1 5 5-6z" fill="#a8a8a8" stroke="#666"/><path d="M6 8h12M5 11h10M11 14h6" stroke="#555"/></symbol>
    <symbol id="layersh" viewBox="0 0 24 24"><path d="M14 10 24 20H10z" fill="#c4c8d8"/><use href="#tubeg"/></symbol>
    <symbol id="camlay" viewBox="0 0 24 24"><path d="M1 6l17-5v18L1 22z" fill="#8e8fbf"/><rect x="4" y="13" width="14" height="9" fill="#7a7ba8" stroke="#444"/><circle cx="11" cy="17.500" r="2.600" fill="#d0d0e8" stroke="#334"/><path d="M18 15l5-2v8l-5-2z" fill="#666"/></symbol>
    <symbol id="report" viewBox="0 0 24 24"><path d="M0 8q5-7 9 0t6 2 9-9" fill="none" stroke="#1818e0" stroke-width="1.400"/><path d="M1 5q5-4 9 2t14 1" fill="none" stroke="#e01010" stroke-width="1.800"/><path d="M2 11h9l3 3v10H2z" fill="#fff" stroke="#333"/><path d="M4 15h7M4 18h8M4 21h8" stroke="#333"/></symbol>
    <symbol id="playlist" viewBox="0 0 24 24"><circle cx="12" cy="12" r="11.500" fill="url(#gr)"/><path d="M4 14h4M10 14l10-4M4 11l14-3" stroke="#fff" stroke-width="1.200" stroke-dasharray="2 1" fill="none"/></symbol>
    <symbol id="first" viewBox="0 0 24 24"><circle cx="12" cy="12" r="11.500" fill="url(#gr)"/><path d="M7 6h3v12H7zM19 6v12l-9-6z" fill="#fff"/></symbol>
    <symbol id="rew" viewBox="0 0 24 24"><circle cx="12" cy="12" r="11.500" fill="url(#gr)"/><path d="M12 6v12l-8-6zM20 6v12l-8-6z" fill="#fff"/></symbol>
    <symbol id="play" viewBox="0 0 24 24"><circle cx="12" cy="12" r="11.500" fill="url(#gr)"/><path d="M8 5l11 7-11 7z" fill="#fff"/></symbol>
    <symbol id="ffw" viewBox="0 0 24 24"><circle cx="12" cy="12" r="11.500" fill="url(#gr)"/><path d="M4 6l8 6-8 6zM12 6l8 6-8 6z" fill="#fff"/></symbol>
    <symbol id="last" viewBox="0 0 24 24"><circle cx="12" cy="12" r="11.500" fill="url(#gr)"/><path d="M6 6l9 6-9 6zM15 6h3v12h-3z" fill="#fff"/></symbol>
    <symbol id="gear" viewBox="0 0 24 24"><circle cx="12" cy="12" r="11.500" fill="url(#gr)"/><circle cx="12" cy="12" r="4" fill="none" stroke="#fff" stroke-width="3"/><path d="M12 4v4M12 16v4M4 12h4M16 12h4M6.500 6.500l2.800 2.800M17.500 6.500l-2.800 2.800M6.500 17.500l2.800-2.800M17.500 17.500l-2.800-2.800" stroke="#fff" stroke-width="2.600"/></symbol>
    <symbol id="funnel" viewBox="0 0 24 24"><path d="M1 4h22L14 15v6h-4v-6z" fill="#dfe4f8" stroke="#666" stroke-dasharray="1 1"/></symbol>
    <symbol id="layers2" viewBox="0 0 24 24"><path d="M12 3l11 6-11 6L1 9z" fill="#c8b8e8"/><path d="M1 12l11 5 11-5v2l-11 5-11-5z" fill="#a8e8a8"/><path d="M1 16l11 5 11-5v2l-11 5-11-5z" fill="#b8b8e8"/></symbol>
    <symbol id="fmodel" viewBox="0 0 24 24"><use href="#fold"/><use href="#cubes" y="3"/></symbol>
    <symbol id="fdia" viewBox="0 0 24 24"><use href="#fold"/><g transform="translate(3 6) scale(.88)"><use href="#slabg"/></g></symbol>
    <symbol id="fold1" viewBox="0 0 24 24"><use href="#fold"/></symbol>
    <symbol id="fnote" viewBox="0 0 24 24"><use href="#fold"/><ellipse cx="15" cy="16" rx="9" ry="6.500" fill="#a8a8a8" stroke="#666"/><path d="M10 15h4M16 15h4M11 18h7" stroke="#555"/></symbol>
    <symbol id="fstyle" viewBox="0 0 24 24"><use href="#fold"/><path fill="url(#rain)" stroke="#222" d="M6 9h10v13H6z"/><path d="M18 10l2 2 3-4M18 15l2 2 3-4M18 20l2 2 3-4" fill="none" stroke="#222" stroke-width="1.200"/></symbol>
    <symbol id="fset" viewBox="0 0 24 24"><use href="#fold"/><rect x="15" y="12" width="8" height="7" fill="#0d0" stroke="#040"/><rect x="7" y="13" width="8" height="7" fill="#0d0" stroke="#040"/><rect x="11" y="16" width="8" height="7" fill="#0d0" stroke="#040"/></symbol>
    <symbol id="fview" viewBox="0 0 24 24"><use href="#fold"/><rect x="7" y="8" width="16" height="12" fill="#8cc0e8" stroke="#345"/><path d="M10 12h4M10 15h4M16 11h4v5h-4z" stroke="#fff" fill="none"/><path d="M15 20v3h-4h8" stroke="#222"/></symbol>
    <symbol id="fmeas" viewBox="0 0 24 24"><use href="#fold"/><g transform="translate(2 2) scale(.9)"><use href="#tubeg"/></g><path d="M4 13 14 5" stroke="#111" stroke-width="1.300"/></symbol>
    <symbol id="tstore" viewBox="0 0 24 24"><path d="M3 7h18v17H3z" fill="#fff"/><path d="M8 7V4q4-5 8 0v3" fill="none" stroke="#fff" stroke-width="1.500"/><rect x="7" y="10" width="4.500" height="4.500" fill="#f25022"/><rect x="12.500" y="10" width="4.500" height="4.500" fill="#7fba00"/><rect x="7" y="15.500" width="4.500" height="4.500" fill="#00a4ef"/><rect x="12.500" y="15.500" width="4.500" height="4.500" fill="#ffb900"/></symbol>
    <symbol id="texplorer" viewBox="0 0 24 24"><path d="M2 3h8l2 3h10v17H2z" fill="#f4c84c"/><path d="M2 12h20v11H2z" fill="#ffe08a"/><path d="M7 16h10v7h-3v-4h-4v4H7z" fill="#1a98d8"/></symbol>
    <symbol id="tchrome" viewBox="0 0 24 24"><circle cx="12" cy="12" r="11" fill="#dd4b39"/><path d="M12 12 2.500 17A11 11 0 0 0 12 23h3z" fill="#2ca14c"/><path d="M12 12h11A11 11 0 0 1 12 23z" fill="#fbc02d"/><circle cx="12" cy="12" r="5" fill="#4a8ef0" stroke="#fff" stroke-width="1.600"/></symbol>
    <symbol id="tnetflix" viewBox="0 0 24 24"><rect x="0" y="0" width="24" height="24" fill="#000"/><path d="M7 3h3.500l3 10V3H17v18h-3.500l-3-10v10H7z" fill="#e50914"/></symbol>
    <symbol id="tmail" viewBox="0 0 24 24"><path d="M2 8l10-6 10 6v14H2z" fill="#fff"/><path d="M5 9l7 6 7-6-7-3z" fill="#111"/><path d="M12 15l3 6 3-11z" fill="#111"/></symbol>
    <symbol id="ttex" viewBox="0 0 24 24"><rect x="3" y="1" width="18" height="23" fill="#5d5d5d" stroke="#aaa" stroke-width=".6"/><circle cx="12" cy="21" r="1.500" fill="#ccc"/></symbol>
    <symbol id="thw" viewBox="0 0 24 24"><path d="M12 3 3 20" stroke="#fff" stroke-width="1.500" fill="none"/><path d="M12 3l3 6" stroke="#e11a1a" stroke-width="2" fill="none"/><path d="M15 9l6 11" stroke="#2aa4e0" stroke-width="2" fill="none"/><path d="M3 21h9" stroke="#f7a614" stroke-width="2"/><path d="M12 21h9" stroke="#2060c0" stroke-width="2"/></symbol>
    <symbol id="tedge" viewBox="0 0 24 24"><path d="M3 14C3 6 10 1 16 2c5 1 7 5 7 11H9c0 5 7 7 13 3v5c-8 4-19 1-19-7zM16 10c0-5-7-5-8 0z" fill="#1e88e5" fill-rule="evenodd"/></symbol>
    <symbol id="tnorton" viewBox="0 0 24 24"><circle cx="12" cy="12" r="10" fill="#fcc419" stroke="#fff" stroke-width="1"/><circle cx="12" cy="12" r="6.500" fill="#fff"/><path d="M8 10l3 5 5-10" fill="none" stroke="#222" stroke-width="2"/></symbol>
    <symbol id="tnote" viewBox="0 0 24 24"><path d="M3 4l14-3 4 18-14 4z" fill="#9fd8dc" stroke="#e8f4f4"/><path d="M6 7l9-2 3 13-9 2z" fill="#5fa8c0"/></symbol>
    <symbol id="thp" viewBox="0 0 24 24"><ellipse cx="12" cy="12" rx="10" ry="6" fill="none" stroke="#5a5a7a" stroke-width="1.200"/><path d="M5 12h12M8 9l2 6M13 9l2 6" stroke="#6f6f95"/></symbol>
    <symbol id="ttask" viewBox="0 0 24 24"><rect x="6" y="4" width="12" height="16" fill="none" stroke="#fff" stroke-width="1.400"/><path d="M3 6v12M21 6v12" stroke="#fff" stroke-width="1.400"/></symbol>
    <symbol id="tmic" viewBox="0 0 24 24"><rect x="9" y="2" width="6" height="13" rx="3" fill="none" stroke="#222" stroke-width="1.400"/><path d="M6 11q0 7 6 7t6-7M12 18v4" fill="none" stroke="#222" stroke-width="1.400"/></symbol>
    <symbol id="tperson" viewBox="0 0 24 24"><circle cx="12" cy="8" r="4" fill="none" stroke="#eee" stroke-width="1.400"/><path d="M5 21l4-9M19 21l-4-9M15 3l5 2" stroke="#eee" stroke-width="1.400" fill="none"/></symbol>
    <symbol id="tnort2" viewBox="0 0 24 24"><circle cx="12" cy="11" r="9" fill="#fcc419"/><circle cx="12" cy="11" r="5" fill="#fff"/><path d="M12 14l8 0 0 8-8 0z" fill="#d32020"/><path d="M14 16l4 4M18 16l-4 4" stroke="#fff" stroke-width="1.300"/></symbol>
    <symbol id="tbat" viewBox="0 0 24 24"><rect x="3" y="8" width="18" height="11" fill="none" stroke="#eee" stroke-width="1.400"/><rect x="5" y="10" width="7" height="7" fill="#eee"/><rect x="8" y="3" width="5" height="5" fill="#eee"/></symbol>
    <symbol id="twifi" viewBox="0 0 24 24"><path d="M2 20a18 18 0 0 1 18-18M7 20a13 13 0 0 1 13-13M12 20a8 8 0 0 1 8-8" fill="none" stroke="#ccc" stroke-width="1.600"/></symbol>
    <symbol id="tvol" viewBox="0 0 24 24"><path d="M3 9h4l6-6v18l-6-6H3z" fill="none" stroke="#eee" stroke-width="1.400"/><path d="M16 9l6 6M22 9l-6 6" stroke="#eee" stroke-width="1.400"/></symbol>
    <symbol id="tnotif" viewBox="0 0 24 24"><path d="M2 2h20v15h-9l-3 5v-5H2z" fill="#fff"/><path d="M5 6h14M5 9h14M5 12h14" stroke="#222"/></symbol>
    <symbol id="tlogo" viewBox="0 0 24 24"><path d="M12 3 2 20" stroke="#e8e8e8" stroke-width="2" fill="none"/><path d="M12 3l3 6" stroke="#e11a1a" stroke-width="2.500" fill="none"/><path d="M15 9l6 11" stroke="#f7a614" stroke-width="2.200" fill="none"/><path d="M3 21h9" stroke="#2aa4e0" stroke-width="2.200"/><path d="M12 21h9" stroke="#f7c640" stroke-width="2.200"/></symbol>
  </svg>

  <div class="app">
    <header class="titlebar">
      <svg class="tlogo"><use href="#tlogo"/></svg>
      <span class="ttext">Teste 2.mvw - HyperWorks 2017 - Student Edition</span>
      <div class="wctl">
        <span class="wbtn"><svg width="12" height="12" viewBox="0 0 12 12"><path d="M1 6.500h10" stroke="#111"/></svg></span>
        <span class="wbtn"><svg width="12" height="12" viewBox="0 0 12 12"><path d="M3.500 3V1h7v7h-2M1.500 3.500h7v7h-7z" fill="none" stroke="#111"/></svg></span>
        <span class="wbtn"><svg width="12" height="12" viewBox="0 0 12 12"><path d="M1 1l10 10M11 1 1 11" stroke="#111"/></svg></span>
      </div>
    </header>
    <nav class="menubar"><span v-for="m in menus" :key="m" class="menu">{{ m }}</span></nav>

    <section class="toolbars">
      <div class="tb tb1">
        <svg v-for="t in tb1" :key="t.k" :class="{ faded: t.f }" :style="t.s" :viewBox="t.v"><use :href="t.h"/><text v-for="l in t.t" :key="l[0]" class="gl" :x="l[1]" :y="l[2]" :font-size="l[3]" :fill="l[4] || '#444'">{{ l[0] }}</text></svg>
        <span class="pagebox">1</span><span class="pageof">of 1</span>
      </div>
      <div class="tb tb2">
        <svg v-for="t in tb2" :key="t.k" :style="t.s" :viewBox="t.v"><use :href="t.h"/></svg>
      </div>
    </section>

    <main class="main">
      <aside class="left">
        <div class="tabs">
          <span class="tab">Session</span>
          <span class="tab active">Results <svg width="10" height="10" viewBox="0 0 10 10" class="x"><path d="M1 1l8 8M9 1 1 9" stroke="#333" stroke-width="1.300"/></svg></span>
        </div>
        <div class="panel">
          <div class="prow">
            <svg v-for="t in panelRow" :key="t.k" :style="t.s" :viewBox="t.v" :class="{ hl: t.n === 'gfplain' }"><use :href="t.h"/></svg>
          </div>
          <div class="grid g1">
            <div class="ghead">
              <span class="gh sorted files">Files</span><span class="gh idc">ID</span>
              <span class="gh wc"><svg width="16" height="16"><use href="#wheel"/></svg></span>
              <span class="gh sb"><svg width="18" height="20"><use href="#slabbar"/></svg></span>
            </div>
            <div class="grow first">
              <svg class="cubesm" width="18" height="14" viewBox="0 2 24 20"><use href="#cubes"/></svg>
              <b class="n1">1</b><b class="n2">1</b><span class="yel"></span>
              <svg class="smslab" width="14" height="14"><use href="#slab"/></svg>
            </div>
            <div class="grow"></div>
            <div class="grow short"></div>
          </div>
          <div class="strip"><i class="tri"></i></div>
          <div class="selrow">
            <span class="spin"><i class="up"></i><i class="dn"></i></span>
            <div class="fsel">Design<svg width="10" height="6" viewBox="0 0 10 6"><path d="M1 1l4 4 4-4" fill="none" stroke="#555"/></svg></div>
          </div>
          <div class="selrow">
            <span class="spin"><i class="up"></i><i class="dn"></i></span>
            <div class="fsel">Iteration 0<svg width="10" height="6" viewBox="0 0 10 6"><path d="M1 1l4 4 4-4" fill="none" stroke="#555"/></svg></div>
          </div>
          <div class="prow eyes">
            <svg v-for="t in eyeRow" :key="t.k" :style="t.s" :viewBox="t.v"><use :href="t.h"/><text v-for="l in t.t" :key="l[0]" class="gl" :x="l[1]" :y="l[2]" :font-size="l[3]" :fill="l[4] || '#444'">{{ l[0] }}</text></svg>
          </div>
          <div class="grid g2">
            <div class="ghead">
              <span class="gh sorted ents">Entities</span>
              <span class="gh ic"><svg width="17" height="17" viewBox="0 0 24 24"><ellipse cx="11" cy="12" rx="10" ry="10" fill="#e6e8f0" stroke="#888"/><text x="7" y="19" class="gi" font-size="17" fill="#2a3ec0">i</text></svg></span>
              <span class="gh idc2">ID</span>
              <span class="gh wc2"><svg width="16" height="16"><use href="#wheel"/></svg></span>
              <span class="gh wc3"><svg width="15" height="15"><use href="#gcube"/></svg></span>
            </div>
            <div class="tree">
              <div v-for="r in tree" :key="r[1]" class="tr">
                <span class="exp"></span>
                <svg class="tico" viewBox="0 0 24 24"><use :href="'#' + r[0]"/><text v-for="l in labels[r[0]] || []" :key="l[0]" class="gl" :x="l[1]" :y="l[2]" :font-size="l[3]" :fill="l[4] || '#444'">{{ l[0] }}</text></svg>
                <span class="tl" :class="{ asm: r[2] }">{{ r[1] }}</span>
              </div>
              <div v-for="n in 4" :key="n" class="tr"></div>
            </div>
          </div>
          <div class="strip s2"><i class="tri"></i></div>
          <div class="grid g3">
            <div class="ghead nv"><span class="gh nm">Name</span><span class="gh">Value</span></div>
            <div v-for="n in 5" :key="n" class="grow"></div>
          </div>
        </div>
      </aside>

      <section class="right">
        <h1 class="dh">Design History</h1>
        <div class="work">
          <div class="vt">
            <div class="vgrips"><i></i><i></i></div>
            <div v-for="(r, i) in vrows" :key="i" class="vrow">
              <svg v-for="t in r" :key="t.k" :style="t.s" :viewBox="t.v"><use :href="t.h"/><text v-for="l in t.t" :key="l[0]" class="gl" :x="l[1]" :y="l[2]" :font-size="l[3]" :fill="l[4] || '#444'">{{ l[0] }}</text></svg>
            </div>
          </div>
          <div class="plot">
            <svg class="mesh" viewBox="511 132 845 336" width="845" height="336">
              <path :d="outline" fill="#ff0000" fill-rule="evenodd"/>
              <path v-for="c in meshCells" :key="c.c" :d="c.d" :fill="c.c" shape-rendering="crispEdges"/>
              <path d="M523 455V425" stroke="#10e010"/>
              <path d="M523 455h31" stroke="#ee1010" stroke-width="1.500"/><rect x="542" y="453" width="5" height="4" fill="#ee1010"/>
              <circle cx="523" cy="455" r="2" fill="#1010e0"/>
            </svg>
            <div class="ptop">
              <div class="pleft">Contour Plot<br>Element Densities(Density)</div>
              <div class="pright">1: 1<br>Design : Iteration 55 : Frame 56</div>
            </div>
            <div class="legend">
              <div v-for="l in legend" :key="l[0]" class="lrow">
                <span class="sw" :style="{ background: l[1] || 'transparent' }"></span>
                <span class="tick"></span>
                <span class="lt">{{ l[0] }}</span>
              </div>
              <div class="lrow nores"><span class="noswatch"></span><span class="nrt">No result</span></div>
            </div>
            <div class="stats">Max = 1.000E+00<br>2D 5785<br>Min = 1.000E-02<br><span class="last2">2D 1<span class="xl">X</span></span></div>
          </div>
        </div>
        <div class="lt1">
          <svg v-for="t in tb3" :key="t.k" :style="t.s" :viewBox="t.v"><use :href="t.h"/></svg>
          <div class="fsel bc">By Comp<svg width="10" height="6" viewBox="0 0 10 6"><path d="M1 1l4 4 4-4" fill="none" stroke="#555"/></svg></div>
          <svg v-for="t in tb3b" :key="t.k" :style="t.s" :viewBox="t.v"><use :href="t.h"/><text v-for="l in t.t" :key="l[0]" class="gl" :x="l[1]" :y="l[2]" :font-size="l[3]" :fill="l[4] || '#444'">{{ l[0] }}</text></svg>
        </div>
        <div class="lt2">
          <svg v-for="t in tb4" :key="t.k" :style="t.s" :viewBox="t.v"><use :href="t.h"/></svg>
          <div class="sliders">
            <div class="sl1"><i></i></div>
            <div class="sl2"><i></i></div>
          </div>
          <svg class="gear"><use href="#gear"/></svg>
        </div>
        <div class="lower">
          <div class="col ca">
            <div class="lbl rowbtn"><span>Result type:</span><span class="btn dots">...</span></div>
            <div class="sel s1">Element Densities (s)<span class="dd"><i></i></span></div>
            <div class="sel s2b">Density<span class="dd"><i></i></span></div>
            <div class="layers"><span>Layers:</span><div class="sel off s3"><span class="dd sm"><i></i></span></div>
              <svg class="fn faded"><use href="#funnel"/></svg><svg class="ars faded"><use href="#ar"/></svg><svg class="ly faded"><use href="#layers2"/></svg>
            </div>
            <label class="chk dis c1"><i></i>Use corner data</label>
          </div>
          <div class="col cb">
            <div class="lbl">Selection:</div>
            <div class="selrow2">
              <span class="btn sq"><i class="blk"></i></span>
              <span class="yb"><b>Components</b></span>
              <span class="btn sq"><svg width="10" height="10" viewBox="0 0 10 10"><path d="M1 1h2v8H1zM9 1v8L3 5z" fill="#222"/></svg></span>
            </div>
            <div class="lbl res">Resolved in:</div>
            <div class="sel off s4"><span class="dd sm"><i></i></span></div>
            <div class="selrow2 sys">
              <span class="yb2">System</span>
              <span class="btn sq d"><svg width="10" height="10" viewBox="0 0 10 10"><path d="M1 1h2v8H1zM9 1v8L3 5z" fill="#888"/></svg></span>
            </div>
            <label class="chk dis c2"><i></i>Use tracking system</label>
            <label class="chk dis c3"><i class="on"></i>Show midside node results</label>
          </div>
          <div class="col cc">
            <div class="lbl">Averaging method:</div>
            <div class="sel s5">None<span class="dd"><i></i></span></div>
            <div class="varr"><label class="chk dis"><i></i>Variation &lt;</label><span class="inp off num">10</span><span class="dim">(%)</span></div>
            <span class="btn dis avg">Averaging Options...</span>
            <div class="lbl env">Envelope trace plot:</div>
            <div class="sel off s5 gr">None<span class="dd sm"><i></i></span></div>
          </div>
          <div class="col cd">
            <div class="lbl vf">Value filter:</div>
            <div class="sel s6">None<span class="dd"><i></i></span></div>
            <span class="inp off w1"></span>
            <span class="inp off w1 w2"></span>
            <span class="btn actb a1">Cache</span>
            <span class="btn actb">Apply</span>
          </div>
          <div class="vline"></div>
          <div class="col ce">
            <div class="rtabs"><span class="rt">Display</span><span class="rt">Legend</span><span class="rt on">Result</span></div>
            <div class="rbox">
              <label class="chk c4"><i></i>Overlay result display</label>
              <span v-for="b in sideBtns" :key="b" class="btn sb2">{{ b }}</span>
            </div>
          </div>
        </div>
      </section>
    </main>
    <footer class="status">Ready</footer>
    <div class="taskbar">
      <span class="start"><svg width="20" height="20" viewBox="0 0 20 20"><path fill="#fff" d="M0 3l8-1v7.500H0zM9 2l11-2v9.500H9zM0 10.500h8V18l-8-1zM9 10.500h11V20L9 18z"/></svg></span>
      <div class="search">
        <span class="ring"></span><span class="stext">Digite aqui para pesquisar</span>
        <svg class="mic"><use href="#tmic"/></svg>
      </div>
      <span class="titem first"><svg class="ti"><use href="#ttask"/></svg></span>
      <span v-for="a in taskApps" :key="a" class="titem" :class="{ open: open.includes(a), cur: a === 'thw' }"><svg class="ti" viewBox="0 0 24 24"><use :href="'#' + a"/><text v-for="l in labels[a] || []" :key="l[0]" class="gt" :x="l[1]" :y="l[2]" :font-size="l[3]" :fill="l[4]">{{ l[0] }}</text></svg></span>
      <div class="tray">
        <svg class="tr1"><use href="#tperson"/></svg>
        <svg width="12" height="8" viewBox="0 0 12 8" class="chev"><path d="M1 7l5-5 5 5" fill="none" stroke="#eee" stroke-width="1.300"/></svg>
        <svg class="tr2"><use href="#tnort2"/></svg>
        <svg class="tr2"><use href="#tbat"/></svg>
        <svg class="tr2 nr"><use href="#twifi"/></svg>
        <svg class="tr2 vl"><use href="#tvol"/></svg>
        <div class="clock">23:08<br>04/02/2018</div>
        <span class="notif"><svg width="22" height="22"><use href="#tnotif"/></svg><b>2</b></span>
      </div>
    </div>
  </div>
</template>

<style>
html, body { margin: 0; background: #f0f0f0; overflow: hidden; }
</style>
<style scoped>
.defs { position: absolute; width: 0; height: 0; }
.app { width: 1366px; height: 768px; display: flex; flex-direction: column; background: #f0f0f0; font: 11px/1.2 "Liberation Sans", Arial, sans-serif; color: #111; overflow: hidden; }
.left, .lower, .status, .lt1, .tb { letter-spacing: -.3px; }
svg { display: block; flex: none; overflow: hidden; }
.gl { font-family: "Liberation Sans", sans-serif; font-weight: 700; letter-spacing: 0; }
.gi { font-family: "Liberation Serif", serif; font-weight: 700; font-style: italic; }
.gt { font-family: "Liberation Serif", serif; letter-spacing: 0; }
.faded { opacity: .35; }
.titlebar { height: 24px; background: #fff; display: flex; align-items: center; font-size: 11.750px; flex: none; }
.tlogo { width: 17px; height: 16px; margin-left: 3px; }
.ttext { margin-left: 4px; color: #000; }
.wctl { margin-left: auto; display: flex; padding-right: 3px; }
.wbtn { width: 45px; display: flex; justify-content: center; }
.menubar { height: 17px; background: #fff; display: flex; font-size: 12px; padding-left: 7px; flex: none; line-height: 16px; }
.menu { margin-right: 13.500px; color: #000; }
.toolbars { height: 67px; flex: none; }
.tb { display: flex; align-items: center; }
.tb1 { height: 34px; }
.tb2 { height: 30px; }
.pagebox { margin-left: 3px; width: 36px; height: 18px; background: #fff; border: 1px solid #777; box-sizing: border-box; text-align: right; padding-right: 2px; font-size: 12px; line-height: 16px; }
.pageof { margin-left: 2px; font-size: 11px; }
.main { display: flex; height: 600px; flex: none; }
.left { width: 432px; flex: none; border-right: 1px solid #8c8c8c; height: 592px; box-sizing: content-box; }
.tabs { height: 20px; margin-top: 3px; padding-left: 5px; display: flex; align-items: flex-end; gap: 1px; }
.tab { height: 20px; width: 56px; box-sizing: border-box; padding: 0 0 0 2px; background: #f0f0f0; border: 1px solid #dcdcdc; border-bottom: 0; display: flex; align-items: center; }
.tab.active { width: 60px; background: #fff; gap: 6px; }
.panel { margin-left: 2px; width: 424px; height: 569px; border: 1px solid #d6d6d6; border-bottom: 0; box-sizing: border-box; }
.prow { height: 27px; display: flex; align-items: center; }
.hl { background: linear-gradient(#ffe2bb, #ffb268); outline: 1px solid #b9906a; }
.grid { width: 422px; border: 1px solid #7d7d7d; border-bottom: 0; border-color: #c8c8c8 #c8c8c8 transparent #777; box-sizing: border-box; background: #fff; }
.g1 { height: 75px; }
.ghead { height: 28px; display: flex; background: linear-gradient(#fff, #e3e3e3); border-bottom: 1px solid #dcdcdc; box-sizing: border-box; }
.gh { display: flex; align-items: center; justify-content: center; border-right: 1px solid #cfcfcf; box-sizing: border-box; padding-top: 2px; }
.sorted { background: linear-gradient(#fff, #c6deeb); justify-content: flex-start; padding-left: 2px; border-right: 1px solid #9bcbe6; border-bottom: 1px solid #9bcbe6; position: relative; }
.sorted::before { content: ""; position: absolute; left: 23px; top: 2px; border: 3px solid transparent; border-top: 0; border-bottom: 4px solid #6ea0c0; }
.files { width: 54px; }
.ents { width: 142px; }
.ents::before { left: 71px; }
.idc { width: 15px; }
.wc { width: 20px; }
.sb { width: 22px; }
.ic { width: 20px; }
.idc2 { width: 15px; }
.wc2 { width: 20px; }
.wc3 { width: 20px; }
.grow { height: 18px; border-bottom: 1px solid #e9f0f5; box-sizing: border-box; display: flex; align-items: center; background: #fff; }
.grow.short { height: 11px; border-bottom: 0; }
.cubesm { margin-left: 18px; }
.n1 { margin-left: 8px; font-size: 12px; }
.n2 { margin-left: 8px; font-size: 12px; }
.yel { margin-left: 6px; width: 11px; height: 11px; background: #ffff00; border: 1px solid #000; }
.smslab { margin-left: 8px; }
.strip { height: 6px; width: 422px; background: #eee; position: relative; border-top: 1px solid #d8d8d8; }
.tri { position: absolute; left: 400px; top: 1px; border: 5px solid transparent; border-top: 5px solid #333; border-bottom: 0; }
.selrow { display: flex; align-items: center; height: 22px; margin-left: 1px; }
.selrow + .selrow { margin-top: 6px; }
.strip + .selrow { margin-top: 3px; }
.spin { width: 11px; display: flex; flex-direction: column; gap: 2px; margin-right: 2px; }
.spin i { height: 10px; background: #fafafa; border: 1px solid #ddd; box-sizing: border-box; display: flex; align-items: center; justify-content: center; }
.spin i::after { content: ""; border: 3.500px solid transparent; }
.spin .up::after { border-top: 0; border-bottom: 4px solid #111; }
.spin .dn::after { border-bottom: 0; border-top: 4px solid #111; }
.fsel { height: 22px; background: #fff; border: 1px solid #777; box-sizing: border-box; display: flex; align-items: center; justify-content: space-between; padding: 0 4px 0 3px; }
.selrow .fsel { width: 407px; flex: none; }
.eyes { height: 35px; }
.g2 { height: 255px; }
.tree { background: #fff; }
.g2 .ghead { height: 21px; }
.tr { height: 18px; border-bottom: 1px solid #e9f0f5; box-sizing: border-box; display: flex; align-items: center; position: relative; background: #fff; }
.tr .exp { margin-left: 5px; width: 9px; height: 9px; box-sizing: border-box; border: 1px solid #9a9a9a; background: linear-gradient(135deg, #fff, #d8dce4); position: relative; z-index: 1; }
.exp::before { content: ""; position: absolute; left: 1px; right: 1px; top: 3px; height: 1px; background: #334; }
.exp::after { content: ""; position: absolute; top: 1px; bottom: 1px; left: 3px; width: 1px; background: #334; }
.tr:nth-child(-n+9)::before { content: ""; position: absolute; left: 9px; top: 0; bottom: 0; border-left: 1px dotted #888; }
.tico { width: 17px; height: 17px; margin-left: 8px; }
.tl { margin-left: 4px; white-space: pre; }
.tl.asm { margin-left: 7px; }
.s2 { height: 8px; }
.g3 { height: 109px; border-top: 1px solid #999; }
.ghead.nv { height: 20px; }
.nm { width: 35px; }
.nv .gh { padding: 2px; }
.right { flex: 1; display: flex; flex-direction: column; min-width: 0; }
.dh { margin: 0; height: 23px; padding-right: 6px; text-align: center; font: bold 16px/25px "Liberation Sans", sans-serif; color: #000; }
.work { display: flex; height: 338px; flex: none; }
.vt { width: 77px; flex: none; }
.vgrips { display: flex; height: 7px; padding: 4px 0 0 8px; gap: 14px; }
.vgrips i { width: 23px; height: 2px; background: repeating-linear-gradient(90deg, #111 0 2px, transparent 2px 7px); }
.vrow { height: 28.500px; display: flex; align-items: center; }
.plot { position: relative; width: 847px; height: 338px; box-sizing: border-box; border: 1px solid #26e4ea; background: linear-gradient(#2e5379 0%, #5c7590 45%, #9a9a9a 100%); color: #ececec; font-size: 13px; line-height: 18px; padding: 6px 8px 0 9px; overflow: hidden; }
.mesh { position: absolute; left: 0; top: 0; }
.ptop { display: flex; justify-content: space-between; position: relative; height: 36px; }
.pleft { line-height: 16px; padding-top: 1px; }
.pright { text-align: right; }
.legend { position: relative; margin-top: 10px; }
.lrow { height: 20px; display: flex; align-items: flex-start; position: relative; }
.sw { width: 10px; height: 20px; flex: none; }
.tick { position: absolute; left: 0; top: 0; width: 19px; height: 1px; background: #fff; }
.lt { margin-left: 15px; margin-top: -9px; color: #f2f2f2; }
.nores { margin-top: -12px; height: 20px; align-items: center; }
.noswatch { width: 10px; height: 10px; background: #c8c8c8; }
.nrt { margin-left: 15px; color: #a6a6a6; }
.stats { position: absolute; left: 9px; top: 261px; line-height: 16px; color: #f0f0f0; }
.last2 { position: relative; }
.xl { position: absolute; left: 40px; top: 3px; font-family: "Liberation Serif", serif; font-size: 13px; }
.lt1, .lt2 { display: flex; align-items: center; flex: none; }
.lt1 { height: 28px; margin-top: 2px; }
.fsel.bc { flex: none; width: 69px; margin-left: 4px; height: 23px; }
.lt2 { height: 28px; margin-top: 3px; }
.sliders { width: 170px; margin-left: 4px; display: flex; flex-direction: column; gap: 3px; }
.sl1 { height: 9px; background: #c3c3c3; border: 1px solid #eee; position: relative; }
.sl1 i { position: absolute; left: 95px; width: 30px; top: 0; bottom: 0; background: linear-gradient(90deg, #fff 49%, #777 49%, #777 51%, #fff 51%); border-bottom: 1px solid #555; box-sizing: border-box; }
.sl2 { height: 4px; background: #c3c3c3; border: 1px solid #eee; position: relative; }
.sl2 i { position: absolute; right: 0; width: 20px; top: 0; bottom: 0; background: #fff; border-bottom: 1px solid #555; box-sizing: border-box; }
.gear { width: 22px; height: 22px; margin-left: 4px; }
.lower { margin-top: 8px; height: 162px; border-top: 1px solid #a8a8a8; border-bottom: 1px solid #777; display: flex; box-sizing: border-box; padding: 7px 0 0 5px; flex: none; }
.col { display: flex; flex-direction: column; flex: none; }
.lbl { height: 14px; line-height: 14px; white-space: nowrap; }
.ca { width: 199px; }
.rowbtn { display: flex; justify-content: space-between; }
.btn { display: inline-flex; align-items: center; justify-content: center; background: #f0f0f0; border: 1px solid; border-color: #fff #5f5f5f #5f5f5f #fff; box-sizing: border-box; color: #111; }
.dots { width: 16px; height: 15px; margin-top: -2px; border-color: #eee #999 #999 #eee; }
.sel { background: #fff; border: 1px solid; border-color: #333 #fff #fff #333; box-sizing: border-box; display: flex; align-items: center; padding-left: 3px; justify-content: space-between; height: 22px; box-shadow: 1px 1px 0 #fff; }
.s1 { margin: 3px 0 0 6px; width: 173px; }
.s2b { margin: 6px 0 0 6px; width: 173px; }
.dd { width: 16px; height: 20px; border: 1px solid; border-color: #fff #555 #555 #fff; background: #f4f4f4; box-sizing: border-box; display: flex; align-items: center; justify-content: center; }
.dd i { border: 3.500px solid transparent; border-top: 4px solid #111; border-bottom: 0; }
.dd.sm i { border-width: 3px 2px 0; border-top-color: #333; }
.off { background: #f0f0f0; color: #777; }
.layers { display: flex; align-items: center; margin: 6px 0 0 7px; height: 22px; }
.s3 { width: 73px; margin-left: 15px; justify-content: flex-end; padding: 0; }
.fn { width: 24px; height: 24px; margin-left: 5px; }
.ars { width: 6px; height: 3px; margin: 0 5px 0 4px; }
.ly { width: 24px; height: 24px; }
.chk { display: flex; align-items: center; gap: 6px; line-height: 14px; white-space: nowrap; }
.chk i { width: 12px; height: 12px; border: 1px solid; border-color: #8a8a8a #fff #fff #8a8a8a; box-sizing: border-box; flex: none; background: #f0f0f0; position: relative; }
.chk i.on::after { content: ""; position: absolute; left: 2px; top: 0; width: 3px; height: 6px; border: solid #777; border-width: 0 2px 2px 0; transform: rotate(40deg); }
.dis { color: #888; }
.c1 { margin: 10px 0 0 7px; }
.cb { width: 163px; margin-left: 10px; }
.selrow2 { display: flex; margin: 3px 0 0 6px; gap: 1px; }
.sq { width: 22px; height: 22px; flex: none; }
.blk { border: 5px solid transparent; border-top: 5px solid #111; border-bottom: 0; }
.yb { width: 108px; height: 22px; background: #e9e95e; border: 1px solid #333; box-sizing: border-box; display: flex; padding: 1px; flex: none; }
.yb b { flex: 1; border: 2px solid #11e0ea; font-weight: 400; text-align: center; line-height: 14px; }
.res { margin-top: 8px; }
.s4 { margin: 1px 0 0 8px; width: 153px; justify-content: flex-end; padding: 0; }
.sys { margin: 3px 0 0 8px; gap: 1px; }
.yb2 { width: 132px; height: 22px; background: #e9e967; border-right: 1px solid #333; border-bottom: 1px solid #333; box-sizing: border-box; text-align: center; line-height: 21px; color: #888; flex: none; }
.d { border-color: #eee #999 #999 #eee; }
.c2 { margin: 5px 0 0 10px; }
.c3 { margin: 5px 0 0 10px; }
.cc { width: 136px; margin-left: 10px; }
.s5 { margin: 4px 0 0 6px; width: 130px; }
.varr { display: flex; align-items: center; margin: 5px 0 0 7px; height: 22px; }
.varr .chk { gap: 5px; }
.inp { display: inline-block; border: 1px solid; border-color: #444 #fff #fff #444; box-sizing: border-box; }
.num { width: 30px; height: 22px; margin-left: 10px; text-align: right; line-height: 20px; padding-right: 3px; }
.dim { margin-left: 6px; color: #555; }
.avg { width: 111px; height: 22px; margin: 6px 0 0 25px; color: #888; border-color: #eee #999 #999 #eee; }
.env { margin-top: 7px; }
.gr { margin-top: 2px; }
.cd { width: 81px; margin-left: 9px; }
.s6 { margin: 5px 0 0 3px; width: 63px; }
.w1 { width: 55px; height: 22px; margin: 4px 0 0 3px; }
.w2 { margin-top: 1px; }
.actb { width: 78px; height: 23px; margin-left: 3px; }
.a1 { margin-top: 10px; margin-bottom: 1px; }
.vline { width: 1px; height: 149px; background: #9a9a9a; margin: 0 5px 0 8px; flex: none; }
.ce { width: 162px; }
.rtabs { display: flex; height: 21px; align-items: flex-end; padding-left: 2px; }
.rt { height: 15px; width: 42px; text-align: center; border-right: 1px solid #ddd; box-sizing: border-box; }
.rt.on { height: 20px; width: 40px; background: #f7f7f7; border: 1px solid #ddd; border-bottom: 0; line-height: 18px; }
.rbox { height: 127px; border: 1px solid #d8d8d8; box-sizing: border-box; padding: 1px 0 0 7px; display: flex; flex-direction: column; }
.sb2 { width: 110px; height: 17px; margin-bottom: 3px; flex: none; }
.c4 { gap: 5px; margin: 2px 0 5px 3px; }
.c4 i { background: #fff; border-color: #777 #ddd #ddd #777; }
.status { height: 20px; flex: none; padding: 3px 0 0 4px; box-sizing: border-box; color: #222; }
.taskbar { height: 40px; flex: none; background: #0c0c0c; display: flex; align-items: stretch; color: #fff; }
.start { width: 47px; padding-left: 3px; box-sizing: border-box; display: flex; align-items: center; justify-content: center; background: #000; }
.search { width: 345px; background: #f2f2f2; border-top: 2px solid #a8a8a8; box-sizing: border-box; display: flex; align-items: center; color: #333; font: 14.200px "Noto Sans", sans-serif; }
.ring { width: 14px; height: 14px; border: 3px solid #111; border-radius: 50%; margin-left: 12px; box-sizing: content-box; }
.stext { margin-left: 9px; }
.mic { width: 20px; height: 20px; margin-left: auto; margin-right: 10px; }
.titem { width: 49.300px; display: flex; align-items: center; justify-content: center; position: relative; box-sizing: border-box; }
.titem.first { width: 48px; }
.ti { width: 24px; height: 24px; }
.titem.open::after { content: ""; position: absolute; left: 3px; right: 3px; bottom: 0; height: 2px; background: #7db9e8; }
.titem.cur { background: #3a3a3a; }
.tray { margin-left: auto; display: flex; align-items: center; color: #eee; font: 12px "Noto Sans", sans-serif; padding-right: 9px; }
.tr1 { width: 18px; height: 18px; margin-right: 21px; }
.chev { margin-right: 8.500px; }
.tr2 { width: 17px; height: 17px; margin-right: 8px; }
.tr2.nr { margin-right: 4px; }
.tr2.vl { margin-right: 6.500px; }
.clock { width: 66px; text-align: center; line-height: 20px; }
.notif { width: 47px; position: relative; display: flex; justify-content: center; }
.notif b { position: absolute; left: 21px; top: 8px; width: 14px; height: 14px; border: 1px solid #fff; border-radius: 50%; background: #111; font-size: 11px; text-align: center; line-height: 14px; font-weight: 400; }
</style>
